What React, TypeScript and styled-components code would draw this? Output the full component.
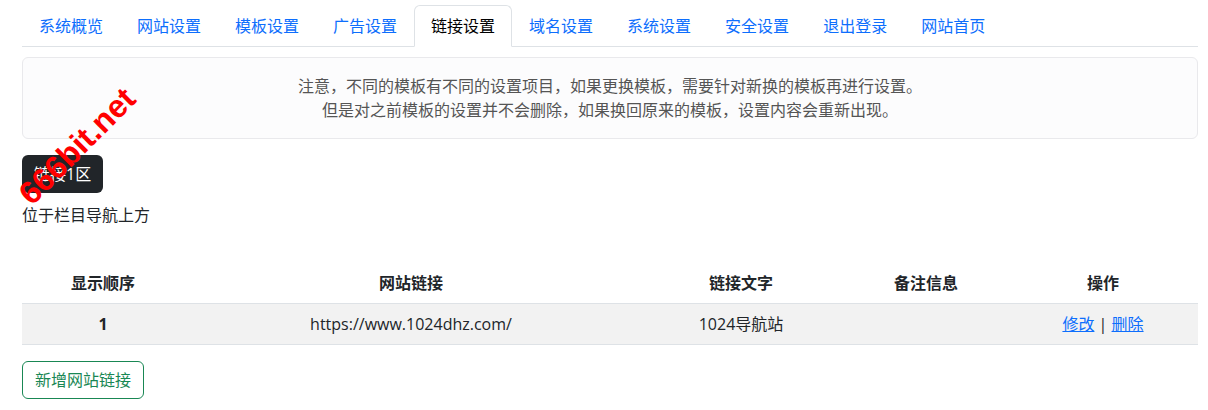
import React from 'react'
import styled, { createGlobalStyle } from 'styled-components'

const GlobalStyle = createGlobalStyle`
    *, *::before, *::after {
        box-sizing: border-box;
    }
    body {
        margin: 0;
        background: #fff;
        color: #212529;
        font-family: "Open Sans", "Noto Sans CJK SC", sans-serif;
        font-size: 16px;
        line-height: 24px;
    }
`

const Page = styled.div`
    position: relative;
    padding: 5px 10px 0 22px;
`

const TabBar = styled.ul`
    display: flex;
    margin: 0;
    padding: 0;
    list-style: none;
    border-bottom: 1px solid #dee2e6;
`

const Tab = styled.li<{ $active?: boolean }>`
    margin-bottom: -1px;
    padding: 8px 16px;
    border: 1px solid transparent;
    border-radius: 6px 6px 0 0;
    color: #0d6efd;
    cursor: pointer;
    ${p => p.$active && `
        color: #000;
        background: #fff;
        border-color: #dee2e6 #dee2e6 #fff;
    `}
`

const Notice = styled.div`
    margin-top: 10px;
    padding: 16px;
    border: 1px solid #e9e9ec;
    border-radius: 6px;
    background: #fcfcfd;
    color: #555;
    text-align: center;
`

const ZoneTag = styled.div`
    display: inline-block;
    margin-top: 16px;
    padding: 7px 12px;
    border-radius: 6px;
    background: #212529;
    color: #fff;
`

const ZoneDesc = styled.p`
    margin: 10px 0 0;
`

const LinkTable = styled.table`
    width: 100%;
    margin-top: 36px;
    border-collapse: collapse;
    table-layout: fixed;
`

const HeadCell = styled.th<{ $w: number }>`
    width: ${p => p.$w}px;
    padding: 8px;
    font-weight: bold;
    text-align: center;
    border-bottom: 1px solid #dee2e6;
`

const Cell = styled.td<{ $bold?: boolean }>`
    padding: 8px;
    text-align: center;
    background: #f2f2f2;
    border-bottom: 1px solid #dee2e6;
    font-weight: ${p => (p.$bold ? 'bold' : 'normal')};
`

const ActionLink = styled.a`
    color: #0d6efd;
    text-decoration: underline;
    cursor: pointer;
`

const AddButton = styled.button`
    display: block;
    margin-top: 16px;
    padding: 6px 12px;
    border: 1px solid #198754;
    border-radius: 6px;
    background: #fff;
    color: #198754;
    font: inherit;
    cursor: pointer;
`

const Watermark = styled.div`
    position: absolute;
    left: 77px;
    top: 146px;
    transform: translate(-50%, -50%) rotate(-45deg);
    color: #ff0000;
    font-family: "Liberation Sans", sans-serif;
    font-weight: bold;
    font-size: 32px;
    line-height: 1;
    white-space: nowrap;
    pointer-events: none;
`

const tabs = ['系统概览', '网站设置', '模板设置', '广告设置', '链接设置', '域名设置', '系统设置', '安全设置', '退出登录', '网站首页']

const columns = [
    { title: '显示顺序', width: 162 },
    { title: '网站链接', width: 454 },
    { title: '链接文字', width: 206 },
    { title: '备注信息', width: 164 },
    { title: '操作', width: 190 },
]

const links = [{ order: 1, url: 'https://www.1024dhz.com/', text: '1024导航站', note: '' }]

export default function App() {
    return (
        <Page>
            <GlobalStyle />
            <TabBar>
                {tabs.map(t => (
                    <Tab key={t} $active={t === '链接设置'}>{t}</Tab>
                ))}
            </TabBar>

            <Notice>
                注意，不同的模板有不同的设置项目，如果更换模板，需要针对新换的模板再进行设置。
                <br />
                但是对之前模板的设置并不会删除，如果换回原来的模板，设置内容会重新出现。
            </Notice>

            <ZoneTag>链接1区</ZoneTag>
            <ZoneDesc>位于栏目导航上方</ZoneDesc>

            <LinkTable>
                <thead>
                    <tr>
                        {columns.map(c => (
                            <HeadCell key={c.title} $w={c.width}>{c.title}</HeadCell>
                        ))}
                    </tr>
                </thead>
                <tbody>
                    {links.map(l => (
                        <tr key={l.order}>
                            <Cell $bold>{l.order}</Cell>
                            <Cell>{l.url}</Cell>
                            <Cell>{l.text}</Cell>
                            <Cell>{l.note}</Cell>
                            <Cell>
                                <ActionLink>修改</ActionLink> | <ActionLink>删除</ActionLink>
                            </Cell>
                        </tr>
                    ))}
                </tbody>
            </LinkTable>

            <AddButton>新增网站链接</AddButton>

            <Watermark>666bit.net</Watermark>
        </Page>
    )
}
